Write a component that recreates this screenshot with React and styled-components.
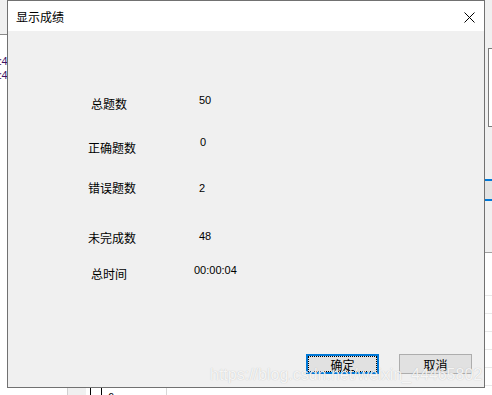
import React from 'react'
import styled, { createGlobalStyle } from 'styled-components'

const GlobalStyle = createGlobalStyle`
  html, body {
    margin: 0;
    padding: 0;
    background: #ffffff;
  }
  * { box-sizing: border-box; }
`

const stats = [
  { label: '总题数', value: '50', indent: 3, drop: 4, shift: 5, height: 42 },
  { label: '正确题数', value: '0', indent: 0, drop: 6, shift: 6, height: 46 },
  { label: '错误题数', value: '2', indent: 0, drop: 0, shift: 5, height: 48 },
  { label: '未完成数', value: '48', indent: 0, drop: 2, shift: 5, height: 34 },
  { label: '总时间', value: '00:00:04', indent: 3, drop: 4, shift: 0, height: 16 },
]

const gridLines = [294, 312, 330, 348, 366, 384]

const App = () => {
  return (
    <Screen>
      <GlobalStyle />
      <Backdrop>
        <LeftPane>
          <PaneHeader />
          <TimeText>00:00:4</TimeText>
          <TimeText>00:00:4</TimeText>
        </LeftPane>
        <MiddlePane>
          <Covered />
          <BottomRow>
            <GrayCell />
            <CheckCell />
            <CellText>6</CellText>
          </BottomRow>
        </MiddlePane>
        <RightPane>
          <TopGap />
          <ListBox />
          <Gap height={52} />
          <TabStrip />
          <Gap height={51} />
          <Table>
            {gridLines.map(y => (
              <TableLine key={y} />
            ))}
          </Table>
        </RightPane>
      </Backdrop>

      <Dialog>
        <TitleBar>
          <Title>显示成绩</Title>
          <CloseButton aria-label='关闭'>
            <svg width='11' height='11' viewBox='0 0 11 11'>
              <path d='M0.5 0.5 L10.5 10.5 M10.5 0.5 L0.5 10.5' stroke='#000' strokeWidth='1' fill='none' />
            </svg>
          </CloseButton>
        </TitleBar>
        <DialogBody>
          <StatGrid>
            {stats.map(s => (
              <StatRow key={s.label} height={s.height}>
                <Label indent={s.indent} drop={s.drop}>{s.label}</Label>
                <Value shift={s.shift}>{s.value}</Value>
              </StatRow>
            ))}
          </StatGrid>
          <Footer>
            <Button primary>确定</Button>
            <Button>取消</Button>
          </Footer>
        </DialogBody>
      </Dialog>

      <Watermark>https://blog.csdn.net/weixin_44465802</Watermark>
    </Screen>
  )
}

export default App

const Screen = styled.div`
  position: relative;
  width: 492px;
  height: 395px;
  overflow: hidden;
  font-family: "Noto Sans CJK SC", "Liberation Sans", sans-serif;
`

const Backdrop = styled.div`
  display: flex;
  width: 100%;
  height: 100%;
`

const LeftPane = styled.div`
  width: 7px;
  display: flex;
  flex-direction: column;
  overflow: hidden;
  background: #fff;
`

const PaneHeader = styled.div`
  height: 35px;
  flex-shrink: 0;
  background: #f0f0f0;
  border-bottom: 1px solid #8a8a8a;
  margin-bottom: 19px;
`

const TimeText = styled.div`
  display: flex;
  justify-content: flex-end;
  white-space: nowrap;
  font-family: "Liberation Sans", sans-serif;
  font-size: 11px;
  letter-spacing: -0.6px;
  line-height: 14px;
  color: #3c1466;
`

const MiddlePane = styled.div`
  flex: 1;
  display: flex;
  flex-direction: column;
`

const Covered = styled.div`
  height: 388px;
  flex-shrink: 0;
`

const BottomRow = styled.div`
  flex: 1;
  display: flex;
  align-items: stretch;
  padding-left: 60px;
  background: #fff;
  border-right: 1px solid #d8d8d8;
  width: 160px;
`

const GrayCell = styled.div`
  width: 19px;
  background: #f0f0f0;
  border-left: 1px solid #d0d0d0;
`

const CheckCell = styled.div`
  width: 12px;
  margin-left: 4px;
  border-left: 1px solid #000;
  border-right: 1px solid #000;
`

const CellText = styled.div`
  margin-left: 6px;
  font-family: "Liberation Sans", sans-serif;
  font-size: 11px;
  line-height: 14px;
  margin-top: 2px;
`

const RightPane = styled.div`
  width: 8px;
  display: flex;
  flex-direction: column;
  background: #f0f0f0;
`

const TopGap = styled.div`
  height: 48px;
  flex-shrink: 0;
`

const Gap = styled.div`
  height: ${p => p.height}px;
  flex-shrink: 0;
`

const ListBox = styled.div`
  height: 79px;
  flex-shrink: 0;
  margin-left: 4px;
  background: #fff;
  border: 1px solid #7a7a7a;
  border-right: none;
`

const TabStrip = styled.div`
  height: 22px;
  flex-shrink: 0;
  background: #e3e3e3;
  border-top: 2px solid #0078d7;
  border-bottom: 2px solid #0078d7;
`

const Table = styled.div`
  flex: 1;
  background: #fff;
  border-top: 1px solid #a0a0a0;
  padding-top: 42px;
  display: flex;
  flex-direction: column;
  gap: 17px;
`

const TableLine = styled.div`
  height: 1px;
  background: #e8e8e8;
  flex-shrink: 0;
`

const Dialog = styled.div`
  position: absolute;
  left: 7px;
  top: 0;
  width: 478px;
  height: 388px;
  display: flex;
  flex-direction: column;
  background: #f0f0f0;
  border: 1px solid #717171;
`

const TitleBar = styled.div`
  height: 30px;
  flex-shrink: 0;
  display: flex;
  align-items: center;
  justify-content: space-between;
  background: #fff;
  padding: 0 9px 0 8px;
`

const Title = styled.div`
  font-size: 12px;
  line-height: 16px;
  color: #000;
  margin-top: 1px;
`

const CloseButton = styled.div`
  width: 11px;
  height: 11px;
  display: flex;
  margin-top: 2px;
`

const DialogBody = styled.div`
  flex: 1;
  display: flex;
  flex-direction: column;
`

const StatGrid = styled.div`
  padding-top: 61px;
  padding-left: 80px;
  display: flex;
  flex-direction: column;
`

const StatRow = styled.div`
  height: ${p => p.height}px;
  display: grid;
  grid-template-columns: 106px auto;
  align-items: start;
`

const Label = styled.div`
  padding-left: ${p => p.indent}px;
  padding-top: ${p => p.drop}px;
  font-size: 12px;
  line-height: 16px;
  color: #000;
`

const Value = styled.div`
  padding-left: ${p => p.shift}px;
  font-family: "Liberation Sans", sans-serif;
  font-size: 11px;
  line-height: 16px;
  color: #000;
`

const Footer = styled.div`
  margin-top: auto;
  display: flex;
  justify-content: flex-end;
  gap: 20px;
  padding: 0 12px 13px 0;
`

const Button = styled.div`
  position: relative;
  width: 73px;
  height: 20px;
  display: flex;
  align-items: center;
  justify-content: center;
  background: #e1e1e1;
  border: ${p => (p.primary ? '2px solid #0078d7' : '1px solid #adadad')};
  font-size: 12px;
  color: #000;
  padding-top: 1px;

  &::after {
    content: '';
    display: ${p => (p.primary ? 'block' : 'none')};
    position: absolute;
    inset: 0;
    border: 1px dotted #000;
  }
`

const Watermark = styled.div`
  position: absolute;
  left: 210px;
  top: 366px;
  font-family: "Liberation Sans", sans-serif;
  font-size: 16px;
  line-height: 18px;
  white-space: nowrap;
  color: rgba(255, 255, 255, 0.85);
  text-shadow: 0 0 1px rgba(120, 120, 120, 0.45);
`
